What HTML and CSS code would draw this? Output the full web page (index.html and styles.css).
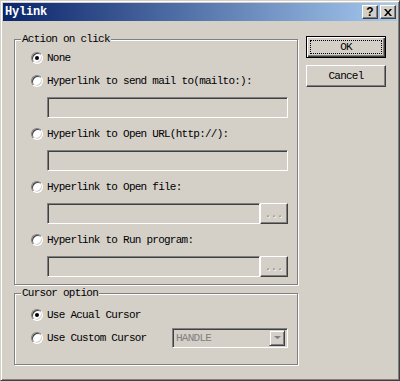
FILE: index.html
```html
<!DOCTYPE html>
<html lang="en">
<head>
  <meta charset="UTF-8" />
  <title>Hylink</title>
  <link rel="stylesheet" href="styles.css">
</head>
<body>

  <div class="window">
    <div class="titlebar">
      <span class="title">Hylink</span>
      <div class="caption-btns">
        <span class="cap-btn help">?</span>
        <span class="cap-btn close">
          <svg width="8" height="7" viewBox="0 0 8 7">
            <path d="M0 0h2l2 2.5L6 0h2L5 3.5 8 7H6L4 4.5 2 7H0l3-3.5z" fill="#000"/>
          </svg>
        </span>
      </div>
    </div>

    <div class="client">
      <div class="groups">
        <fieldset class="group group-action">
          <legend>Action on click</legend>
          <label class="opt first"><span class="radio checked"></span>None</label>

          <label class="opt second"><span class="radio"></span>Hyperlink to send mail to(mailto:):</label>
          <div class="field-row"><div class="field"></div></div>

          <label class="opt"><span class="radio"></span>Hyperlink to Open URL(http://):</label>
          <div class="field-row"><div class="field"></div></div>

          <label class="opt"><span class="radio"></span>Hyperlink to Open file:</label>
          <div class="field-row"><div class="field"></div><span class="browse">...</span></div>

          <label class="opt"><span class="radio"></span>Hyperlink to Run program:</label>
          <div class="field-row"><div class="field"></div><span class="browse">...</span></div>
        </fieldset>

        <fieldset class="group group-cursor">
          <legend>Cursor option</legend>
          <label class="opt first"><span class="radio checked"></span>Use Acual Cursor</label>
          <div class="opt combo-row">
            <span class="radio"></span>Use Custom Cursor
            <div class="combo">
              <span class="combo-text">HANDLE</span>
              <span class="combo-arrow">
                <svg width="7" height="5" viewBox="0 0 7 5">
                  <path d="M1 1h5L3.5 4z" fill="#fff"/>
                  <path d="M0 0h7L3.5 3.5z" fill="#808080"/>
                </svg>
              </span>
            </div>
          </div>
        </fieldset>
      </div>

      <div class="buttons">
        <button class="btn default"><span class="focus">OK</span></button>
        <button class="btn">Cancel</button>
      </div>
    </div>
  </div>

</body>
</html>
```

FILE: styles.css
```css
* {
  box-sizing: border-box;
  margin: 0;
  padding: 0;
}

body {
  background: #d4d0c8;
  font-family: "Liberation Mono", "DejaVu Sans Mono", monospace;
  font-size: 11px;
  letter-spacing: -0.75px;
  color: #000;
}

.window {
  width: 400px;
  height: 381px;
  background: #d4d0c8;
  border: 1px solid;
  border-color: #d4d0c8 #404040 #404040 #d4d0c8;
  box-shadow: inset 1px 1px #fff, inset -1px -1px #808080;
  padding: 2px;
}

/* title bar */
.titlebar {
  height: 18px;
  display: flex;
  align-items: center;
  justify-content: space-between;
  padding-left: 2px;
  background: linear-gradient(to right, #0a246a, #a6caf0);
}

.title {
  color: #fff;
  font-weight: bold;
  font-size: 12px;
  letter-spacing: -0.2px;
}

.caption-btns {
  display: flex;
  gap: 2px;
  margin-right: 1px;
}

.cap-btn {
  width: 16px;
  height: 14px;
  display: flex;
  align-items: center;
  justify-content: center;
  background: #d4d0c8;
  border: 1px solid;
  border-color: #fff #404040 #404040 #fff;
  box-shadow: inset -1px -1px #808080;
}

.cap-btn.help {
  font-family: "Liberation Sans", sans-serif;
  font-weight: bold;
  font-size: 12px;
  letter-spacing: 0;
  line-height: 12px;
}

/* client area */
.client {
  display: flex;
  gap: 8px;
  padding: 12px 0 0 11px;
}

.groups {
  width: 284px;
}

.group {
  border: 1px solid #808080;
  box-shadow: inset 1px 1px #fff, 1px 1px #fff;
  padding: 0 9px 7px 6px;
  min-width: 0;
}

.group legend {
  background: #d4d0c8;
  padding: 0 1px;
  line-height: 13px;
  height: 13px;
}

.group-cursor {
  margin-top: 2px;
  padding-bottom: 16px;
}

.opt {
  display: flex;
  align-items: center;
  height: 16px;
  margin: 8px 0 0 10px;
  white-space: nowrap;
}

.opt.first {
  margin-top: 4px;
}

.opt.second {
  margin-top: 7px;
}

.group-cursor .opt.first {
  margin-top: 7px;
}

.radio {
  width: 12px;
  height: 12px;
  margin-right: 4px;
  flex: none;
  border-radius: 50%;
  background: #fff;
  border: 1px solid;
  border-color: #808080 #fff #fff #808080;
  box-shadow: inset 1px 1px #404040, inset -1px -1px #d4d0c8;
  display: flex;
  align-items: center;
  justify-content: center;
}

.radio.checked::after {
  content: "";
  width: 4px;
  height: 4px;
  border-radius: 50%;
  background: #000;
}

.field-row {
  display: flex;
  height: 21px;
  margin: 8px 0 0 26px;
}

.field {
  flex: 1;
  background: #d4d0c8;
  border: 1px solid;
  border-color: #808080 #fff #fff #808080;
  box-shadow: inset 1px 1px #404040, inset -1px -1px #d4d0c8;
}

.browse {
  width: 28px;
  flex: none;
  display: flex;
  align-items: center;
  justify-content: center;
  padding-top: 2px;
  color: #808080;
  text-shadow: 1px 1px #fff;
  letter-spacing: 0;
  font-size: 10px;
  background: #d4d0c8;
  border: 1px solid;
  border-color: #fff #404040 #404040 #fff;
  box-shadow: inset -1px -1px #808080;
}

/* custom cursor combo */
.combo-row {
  height: 20px;
  margin-top: 5px;
}

.combo {
  width: 116px;
  height: 20px;
  margin-left: auto;
  display: flex;
  align-items: center;
  justify-content: space-between;
  padding: 2px;
  background: #d4d0c8;
  border: 1px solid;
  border-color: #808080 #fff #fff #808080;
  box-shadow: inset 1px 1px #404040, inset -1px -1px #d4d0c8;
}

.combo-text {
  color: #808080;
  padding-left: 1px;
}

.combo-arrow {
  width: 16px;
  height: 16px;
  display: flex;
  align-items: center;
  justify-content: center;
  background: #d4d0c8;
  border: 1px solid;
  border-color: #d4d0c8 #404040 #404040 #d4d0c8;
  box-shadow: inset 1px 1px #fff, inset -1px -1px #808080;
}

/* right buttons */
.buttons {
  display: flex;
  flex-direction: column;
  gap: 7px;
  margin-top: 3px;
}

.btn {
  width: 80px;
  height: 22px;
  background: #d4d0c8;
  font-family: inherit;
  font-size: 11px;
  letter-spacing: -0.75px;
  color: #000;
  border: 1px solid;
  border-color: #fff #404040 #404040 #fff;
  box-shadow: inset -1px -1px #808080;
}

.btn.default {
  border: 1px solid #000;
  box-shadow: inset 1px 1px #fff, inset -1px -1px #404040, inset -2px -2px #808080;
  padding: 3px;
  display: flex;
}

.btn .focus {
  flex: 1;
  border: 1px dotted #000;
  display: flex;
  align-items: center;
  justify-content: center;
}
```
